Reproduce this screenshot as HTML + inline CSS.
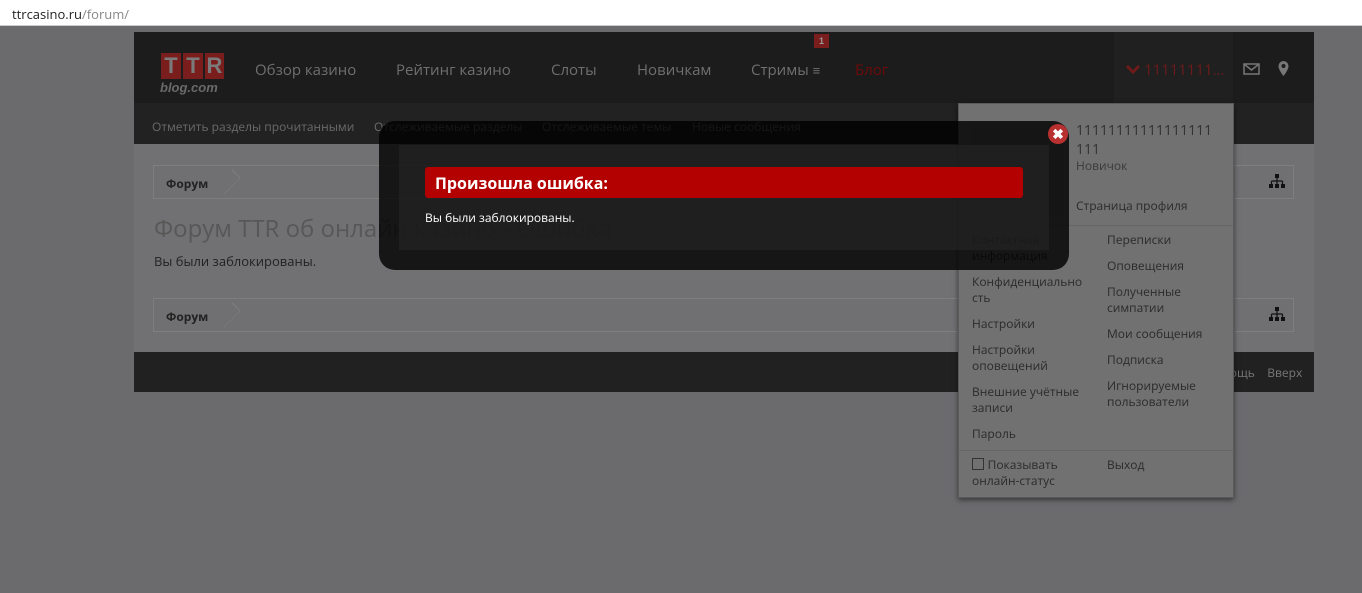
<!DOCTYPE html>
<html><head><meta charset="utf-8"><style>
*{margin:0;padding:0;box-sizing:border-box}
body{width:1362px;height:593px;background:#6b6b6e;font-family:"Open Sans","Liberation Sans","DejaVu Sans",sans-serif;position:relative;overflow:hidden}
.abs{position:absolute}
.bar{left:0;top:0;width:1362px;height:26px;background:#fff;border-bottom:1px solid #ccc}
.url{left:12px;top:5px;font-size:13px;color:#222}
.url span{color:#888}
.wrap{left:134px;top:32px;width:1180px;height:360px;background:#717173}
.hdr{left:134px;top:32px;width:1180px;height:71px;background:#1c1c1c}
.sub{left:134px;top:103px;width:1180px;height:41px;background:#222}
.nav{top:60px;font-size:15px;color:#6f6f6f}
.subl{top:118px;font-size:12px;color:#6a6a6a}
.crumb{left:153px;width:1141px;height:34px;border:1px solid #7e7e7e;background:#707072}
.crumb b{position:absolute;left:12px;top:9px;font-size:12px;color:#222}
.crumb i{position:absolute;left:62px;top:4px;width:24px;height:24px;border-top:1px solid #7e7e7e;border-right:1px solid #7e7e7e;transform:rotate(45deg) scaleX(.5);transform-origin:center}
.ft{left:134px;top:352px;width:1180px;height:40px;background:#212121}
.dd{left:958px;top:103px;width:276px;height:395px;background:#717171;border:1px solid #5a5a5a;box-shadow:0 2px 5px rgba(0,0,0,.5)}
.dd .t{position:absolute;font-size:12px;color:#2b2b2b;line-height:16px}
.modal{left:379px;top:121px;width:690px;height:149px;background:rgba(0,0,0,.8);border-radius:16px}
.inner{left:399px;top:145px;width:650px;height:105px;background:rgba(40,40,40,.55)}
.red{left:425px;top:167px;width:598px;height:31px;background:#b30000;border-radius:3px;color:#fff;font-weight:bold;font-size:16px;padding:5px 10px}
</style></head><body>
<div class="abs bar"></div>
<div class="abs url">ttrcasino.ru<span>/forum/</span></div>
<div class="abs wrap"></div>
<div class="abs hdr"></div>
<div class="abs" style="left:161px;top:53px;width:20px;height:26px;background:#7a1d1d;color:#7a7a7a;font:bold 22px 'Liberation Sans';text-align:center;line-height:26px">T</div>
<div class="abs" style="left:183px;top:53px;width:20px;height:26px;background:#7a1d1d;color:#7a7a7a;font:bold 22px 'Liberation Sans';text-align:center;line-height:26px">T</div>
<div class="abs" style="left:205px;top:53px;width:19px;height:26px;background:#7a1d1d;color:#7a7a7a;font:bold 22px 'Liberation Sans';text-align:center;line-height:26px">R</div>
<div class="abs" style="left:160px;top:80px;font:italic bold 13px 'Liberation Sans';color:#6a6a6a">blog.com</div>
<div class="abs nav" style="left:255px">Обзор казино</div>
<div class="abs nav" style="left:396px">Рейтинг казино</div>
<div class="abs nav" style="left:551px">Слоты</div>
<div class="abs nav" style="left:637px">Новичкам</div>
<div class="abs nav" style="left:751px">Стримы <span style="font-size:13px">≡</span></div>
<div class="abs" style="left:814px;top:34px;width:15px;height:14px;background:#7a1d1d;color:#999;font:bold 9px sans-serif;text-align:center;line-height:14px">1</div>
<div class="abs nav" style="left:855px;color:#6e0a0a">Блог</div>
<div class="abs" style="left:1114px;top:32px;width:119px;height:71px;background:#202020"></div>
<svg class="abs" style="left:1126px;top:64px" width="14" height="10"><path d="M1 2 L7 8 L13 2" stroke="#6e1a1a" stroke-width="3" fill="none"/></svg>
<div class="abs nav" style="left:1144px;color:#6e1a1a">11111111...</div>
<svg class="abs" style="left:1243px;top:63px" width="17" height="12"><rect x="1" y="1" width="15" height="10" fill="none" stroke="#777" stroke-width="1.5"/><path d="M1 1 L8.5 7 L16 1" fill="none" stroke="#777" stroke-width="1.5"/></svg>
<svg class="abs" style="left:1278px;top:61px" width="11" height="15"><path d="M5.5 0 A5 5 0 0 1 10.5 5 C10.5 9 5.5 15 5.5 15 C5.5 15 0.5 9 0.5 5 A5 5 0 0 1 5.5 0Z" fill="#777"/><circle cx="5.5" cy="5" r="2" fill="#1c1c1c"/></svg>
<div class="abs sub"></div>
<div class="abs subl" style="left:152px">Отметить разделы прочитанными</div>
<div class="abs subl" style="left:374px">Отслеживаемые разделы</div>
<div class="abs subl" style="left:542px">Отслеживаемые темы</div>
<div class="abs subl" style="left:692px">Новые сообщения</div>
<div class="abs crumb" style="top:165px"><b>Форум</b><i></i></div>
<svg class="abs" style="left:1269px;top:174px" width="16" height="14"><rect x="6" y="0" width="4" height="4" fill="#111"/><path d="M8 4V7M2.5 7H13.5M2.5 7V10M8 7V10M13.5 7V10" stroke="#111" stroke-width="1.2" fill="none"/><rect x="0" y="10" width="4" height="4" fill="#111"/><rect x="6" y="10" width="4" height="4" fill="#111"/><rect x="12" y="10" width="4" height="4" fill="#111"/></svg>
<div class="abs" style="left:154px;top:212px;font-size:24px;color:#575757">Форум TTR об онлайн казино - Ошибка</div>
<div class="abs" style="left:154px;top:252px;font-size:13px;color:#222">Вы были заблокированы.</div>
<div class="abs crumb" style="top:298px"><b>Форум</b><i></i></div>
<svg class="abs" style="left:1269px;top:307px" width="16" height="14"><rect x="6" y="0" width="4" height="4" fill="#111"/><path d="M8 4V7M2.5 7H13.5M2.5 7V10M8 7V10M13.5 7V10" stroke="#111" stroke-width="1.2" fill="none"/><rect x="0" y="10" width="4" height="4" fill="#111"/><rect x="6" y="10" width="4" height="4" fill="#111"/><rect x="12" y="10" width="4" height="4" fill="#111"/></svg>
<div class="abs ft"></div>
<div class="abs" style="left:1205px;top:364px;font-size:12px;color:#777">Помощь&nbsp;&nbsp;&nbsp;&nbsp;Вверх</div>
<div class="abs dd">
<div class="abs" style="left:12px;top:20px;width:92px;height:92px;background:#6b6b6b"></div>
<div class="t" style="left:117px;top:17px;font-size:14px;line-height:19px;color:#333;width:142px;word-break:break-all">11111111111111111111</div>
<div class="t" style="left:117px;top:54px;color:#3a3a3a">Новичок</div>
<div class="t" style="left:117px;top:94px">Страница профиля</div>
<div class="abs" style="left:0;top:121px;width:274px;border-top:1px solid #656565"></div>
<div class="t" style="left:13px;top:128px">Контактная<br>информация</div>
<div class="t" style="left:13px;top:170px">Конфиденциально<br>сть</div>
<div class="t" style="left:13px;top:212px">Настройки</div>
<div class="t" style="left:13px;top:238px">Настройки<br>оповещений</div>
<div class="t" style="left:13px;top:280px">Внешние учётные<br>записи</div>
<div class="t" style="left:13px;top:322px">Пароль</div>
<div class="t" style="left:148px;top:128px">Переписки</div>
<div class="t" style="left:148px;top:154px">Оповещения</div>
<div class="t" style="left:148px;top:180px">Полученные<br>симпатии</div>
<div class="t" style="left:148px;top:222px">Мои сообщения</div>
<div class="t" style="left:148px;top:248px">Подписка</div>
<div class="t" style="left:148px;top:274px">Игнорируемые<br>пользователи</div>
<div class="abs" style="left:0;top:346px;width:274px;border-top:1px solid #656565"></div>
<div class="abs" style="left:13px;top:354px;width:12px;height:12px;border:1px solid #333"></div>
<div class="t" style="left:13px;top:353px">&nbsp;&nbsp;&nbsp;&nbsp;&nbsp;Показывать<br>онлайн-статус</div>
<div class="t" style="left:148px;top:353px">Выход</div>
</div>
<div class="abs modal"></div>
<div class="abs inner"></div>
<div class="abs red">Произошла ошибка:</div>
<div class="abs" style="left:425px;top:209px;font-size:12px;color:#fff">Вы были заблокированы.</div>
<div class="abs" style="left:1048px;top:124px;width:20px;height:20px;border-radius:50%;background:#b83030;color:#fff;font:bold 14px sans-serif;text-align:center;line-height:20px">✖</div>
</body></html>
